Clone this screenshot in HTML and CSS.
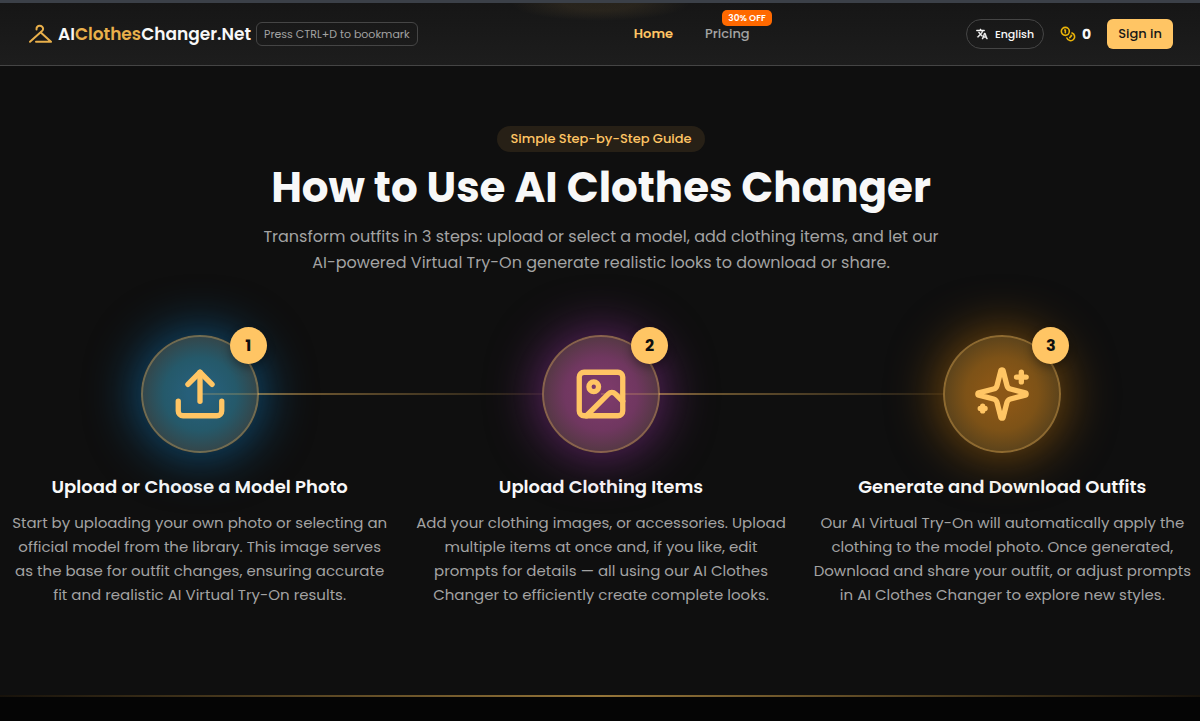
FILE: index.html
```
<!DOCTYPE html>
<html lang="en">
<head>
    <meta charset="UTF-8">
    <meta name="viewport" content="width=device-width, initial-scale=1.0">
    <title>AI Clothes Changer</title>
    <link rel="stylesheet" href="styles.css">
</head>
<body>
    <header class="header">
        <div class="brand">
            <a href="#" class="logo">
                <svg class="logo-icon" viewBox="0 0 24 20" fill="none" stroke="currentColor" stroke-width="2" stroke-linecap="round" stroke-linejoin="round"><path d="M8.500 5.500C8.300 3.200 9.800 1.800 11.700 1.800c2 0 3.500 1.400 3.400 3.200-.1 1.700-1.500 2.300-2.500 3.300L2 17.800"/><path d="M12.800 8.500 23 17.800H8"/></svg>
                <span>AI<span class="gold">Clothes</span>Changer.Net</span>
            </a>
            <span class="bookmark">Press CTRL+D to bookmark</span>
        </div>
        <nav class="nav">
            <a href="#" class="active">Home</a>
            <a href="#pricing" class="pricing">Pricing<span class="sale">30% OFF</span></a>
        </nav>
        <div class="actions">
            <button class="lang">
                <svg width="12" height="12" viewBox="0 0 24 24" fill="currentColor" stroke="currentColor"><path d="m12.870 15.070-2.540-2.510.03-.03A17.520 17.520 0 0 0 14.070 6H17V4h-7V2H8v2H1v2h11.170C11.500 7.920 10.440 9.750 9 11.350 8.070 10.320 7.300 9.190 6.690 8h-2c.73 1.630 1.730 3.170 2.980 4.560l-5.090 5.020L4 19l5-5 3.110 3.110.76-2.040zM18.500 10h-2L12 22h2l1.120-3h4.750L21 22h2l-4.500-12zm-2.620 7 1.620-4.330L19.120 17h-3.240z"/></svg>
                English
            </button>
            <span class="credits">
                <svg width="16" height="16" viewBox="0 0 24 24" fill="none" stroke="currentColor" stroke-width="2.4" stroke-linecap="round" stroke-linejoin="round"><circle cx="8" cy="8" r="6"/><path d="M18.090 10.370A6 6 0 1 1 10.340 18"/><path d="M7 6h1v4"/><path d="m16.710 13.880.7.71-2.820 2.820"/></svg>
                0
            </span>
            <button class="sign-in">Sign in</button>
        </div>
    </header>

    <main class="guide">
        <span class="pill">Simple Step-by-Step Guide</span>
        <h1>How to Use AI Clothes Changer</h1>
        <p class="subtitle">Transform outfits in 3 steps: upload or select a model, add clothing items, and let our AI-powered Virtual Try-On generate realistic looks to download or share.</p>

        <div class="steps">
            <section class="step">
                <div class="step-icon blue">
                    <svg viewBox="0 0 24 24"><path d="M21 15v4a2 2 0 0 1-2 2H5a2 2 0 0 1-2-2v-4"/><path d="m17 8-5-5-5 5"/><path d="M12 3v12"/></svg>
                    <span class="number">1</span>
                </div>
                <h2>Upload or Choose a Model Photo</h2>
                <p>Start by uploading your own photo or selecting an official model from the library. This image serves as the base for outfit changes, ensuring accurate fit and realistic AI Virtual Try-On results.</p>
            </section>
            <section class="step">
                <div class="step-icon purple">
                    <svg viewBox="0 0 24 24"><rect x="3" y="3" width="18" height="18" rx="2"/><circle cx="9" cy="9" r="2"/><path d="m21 15-3.086-3.086a2 2 0 0 0-2.828 0L6 21"/></svg>
                    <span class="number">2</span>
                </div>
                <h2>Upload Clothing Items</h2>
                <p>Add your clothing images, or accessories. Upload multiple items at once and, if you like, edit prompts for details — all using our AI Clothes Changer to efficiently create complete looks.</p>
            </section>
            <section class="step">
                <div class="step-icon orange">
                    <svg viewBox="0 0 24 24"><path d="M9.937 15.500A2 2 0 0 0 8.500 14.063l-6.135-1.582a.5.5 0 0 1 0-.962L8.500 9.936A2 2 0 0 0 9.937 8.500l1.582-6.135a.5.5 0 0 1 .963 0L14.063 8.500A2 2 0 0 0 15.500 9.937l6.135 1.581a.5.5 0 0 1 0 .964L15.500 14.063a2 2 0 0 0-1.437 1.437l-1.582 6.135a.5.5 0 0 1-.963 0z"/><path d="M20 3v4M22 5h-4M4 17v2M5 18H3"/></svg>
                    <span class="number">3</span>
                </div>
                <h2>Generate and Download Outfits</h2>
                <p>Our AI Virtual Try-On will automatically apply the clothing to the model photo. Once generated, Download and share your outfit, or adjust prompts in AI Clothes Changer to explore new styles.</p>
            </section>
        </div>
    </main>
    <div class="divider"></div>
</body>
</html>
```
FILE: styles.css
```
* {
    box-sizing: border-box;
}
body {
    margin: 0;
    min-height: 100vh;
    background: #050505;
    color: #f8f8f8;
    font-family: Poppins, Inter, sans-serif;
    overflow-x: hidden;
}
a {
    color: inherit;
    text-decoration: none;
}
button {
    font-family: inherit;
    cursor: pointer;
}
h1, h2, p {
    margin: 0;
}

/* Header */
.header {
    display: flex;
    align-items: center;
    justify-content: space-between;
    height: 66px;
    padding: 0 27px 0 28px;
    border-top: 3px solid #3b4048;
    border-bottom: 1px solid #454545;
    background:
        radial-gradient(ellipse 90px 18px at 50% 0, rgba(255, 196, 100, 0.08) 40%, transparent),
        linear-gradient(#161616, #1d1d1d);
}
.brand, .logo, .nav, .actions, .credits, .lang {
    display: flex;
    align-items: center;
}
.brand {
    gap: 5px;
}
.logo {
    gap: 6px;
    font-size: 17px;
    font-weight: 600;
    white-space: nowrap;
}
.logo-icon {
    width: 24px;
    height: 20px;
    color: #e9b04b;
}
.gold {
    color: #e9b04b;
}
.bookmark {
    padding: 0 7px;
    border: 1px solid #454545;
    border-radius: 6px;
    color: #a3a3a3;
    font-size: 11px;
    line-height: 22px;
    white-space: nowrap;
}
.nav {
    gap: 32px;
    color: #a3a3a3;
    font-size: 13px;
    font-weight: 500;
}
.nav .active {
    color: #ffc564;
    font-weight: 600;
}
.pricing {
    position: relative;
}
.sale {
    position: absolute;
    top: -14px;
    right: -22px;
    padding: 0 6px;
    border-radius: 5px;
    background: #ff6900;
    color: #fff;
    font-size: 9px;
    font-weight: 600;
    line-height: 16px;
    white-space: nowrap;
}
.lang {
    gap: 7px;
    height: 30px;
    padding: 0 9px;
    border: 1px solid #454545;
    border-radius: 15px;
    background: none;
    color: #f8f8f8;
    font-size: 11px;
    font-weight: 500;
}
.credits {
    gap: 6px;
    margin: 0 16px;
    font-size: 14px;
    font-weight: 700;
}
.credits svg {
    color: #eab308;
}
.sign-in {
    height: 30px;
    padding: 0 11px;
    border: 0;
    border-radius: 6px;
    background: #ffc564;
    color: #171717;
    font-size: 13px;
    font-weight: 500;
}

/* Guide */
.guide {
    display: flex;
    flex-direction: column;
    align-items: center;
    padding: 60px 9px 88px 11px;
    background: #0f0f0f;
    text-align: center;
}
.pill {
    padding: 0 13px;
    border-radius: 13px;
    background: #272016;
    color: #ffc564;
    font-size: 13px;
    font-weight: 500;
    line-height: 26px;
}
h1 {
    margin: 12px 0;
    font-size: 42px;
    font-weight: 700;
    line-height: 48px;
}
.subtitle {
    max-width: 690px;
    color: #a3a3a3;
    font-size: 16px;
    line-height: 26px;
}
.steps {
    display: grid;
    grid-template-columns: repeat(3, 1fr);
    gap: 24px;
    width: 100%;
    margin-top: 59px;
}
.step {
    position: relative;
}
.step-icon {
    position: relative;
    display: flex;
    align-items: center;
    justify-content: center;
    width: 118px;
    height: 118px;
    margin: 0 auto 20px;
    border: 2px solid rgba(255, 197, 100, 0.3);
    border-radius: 50%;
}
.step-icon svg {
    position: relative;
    z-index: 1;
    width: 58px;
    height: 58px;
    fill: none;
    stroke: #ffc564;
    stroke-width: 2.2;
    stroke-linecap: round;
    stroke-linejoin: round;
}
.blue {
    background: radial-gradient(circle, #265f7a 15%, #25596a 45%, #34464a 72%);
    box-shadow: 0 0 50px 4px rgba(14, 115, 180, 0.65);
}
.purple {
    background: radial-gradient(circle, #7b3a69 15%, #703760 45%, #553844 72%);
    box-shadow: 0 0 50px 4px rgba(150, 50, 160, 0.6);
}
.orange {
    background: radial-gradient(circle, #8c5716 15%, #7d5217 45%, #5c431b 72%);
    box-shadow: 0 0 50px 4px rgba(200, 120, 10, 0.55);
}
/* line running to the next step */
.step:not(:last-child)::after {
    content: "";
    position: absolute;
    top: 58px;
    left: 50%;
    width: calc(100% + 24px);
    height: 2px;
    background: linear-gradient(to right, rgba(255, 197, 100, 0.2) 58px, rgba(255, 197, 100, 0.45) 58px, rgba(255, 197, 100, 0));
}
.number {
    position: absolute;
    top: -10px;
    right: -10px;
    width: 37px;
    height: 37px;
    border-radius: 50%;
    background: #ffc564;
    box-shadow: 0 4px 8px rgba(0, 0, 0, 0.3);
    color: #0f0f0f;
    font-size: 16px;
    font-weight: 700;
    line-height: 37px;
}
h2 {
    margin-bottom: 10px;
    font-size: 18px;
    font-weight: 600;
    line-height: 28px;
}
.step p {
    color: #a3a3a3;
    font-size: 15px;
    line-height: 24px;
}
.divider {
    height: 2px;
    background: linear-gradient(to right, #17120b, #957539, #17120b);
}
```
